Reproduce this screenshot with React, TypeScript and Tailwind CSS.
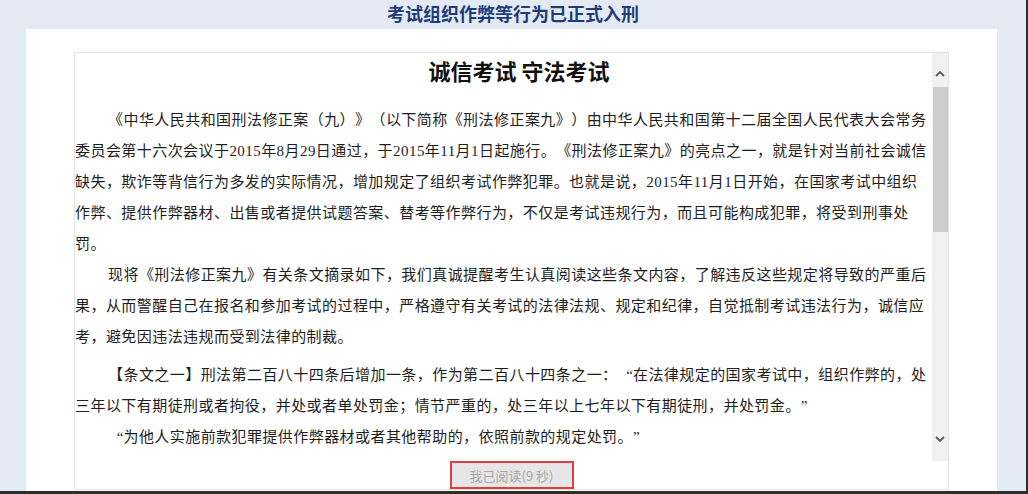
import React from "react"

const FONT = { fontFamily: '"Liberation Serif", "Noto Sans CJK SC", serif' }

const paragraphs: { lines: string[]; className?: string }[] = [
  {
    lines: [
      "《中华人民共和国刑法修正案（九）》（以下简称《刑法修正案九》）由中华人民共和国第十二届全国人民代表大会常务",
      "委员会第十六次会议于2015年8月29日通过，于2015年11月1日起施行。《刑法修正案九》的亮点之一，就是针对当前社会诚信",
      "缺失，欺诈等背信行为多发的实际情况，增加规定了组织考试作弊犯罪。也就是说，2015年11月1日开始，在国家考试中组织",
      "作弊、提供作弊器材、出售或者提供试题答案、替考等作弊行为，不仅是考试违规行为，而且可能构成犯罪，将受到刑事处",
      "罚。",
    ],
  },
  {
    lines: [
      "现将《刑法修正案九》有关条文摘录如下，我们真诚提醒考生认真阅读这些条文内容，了解违反这些规定将导致的严重后",
      "果，从而警醒自己在报名和参加考试的过程中，严格遵守有关考试的法律法规、规定和纪律，自觉抵制考试违法行为，诚信应",
      "考，避免因违法违规而受到法律的制裁。",
    ],
  },
  {
    className: "mt-[7px]",
    lines: [
      "【条文之一】刑法第二百八十四条后增加一条，作为第二百八十四条之一：“在法律规定的国家考试中，组织作弊的，处",
      "三年以下有期徒刑或者拘役，并处或者单处罚金；情节严重的，处三年以上七年以下有期徒刑，并处罚金。”",
    ],
  },
  {
    lines: ["“为他人实施前款犯罪提供作弊器材或者其他帮助的，依照前款的规定处罚。”"],
  },
]

// full-width boxes for curly quotes so they take one character cell like the original
function renderLine(line: string) {
  return line.split(/([“”])/).map((part, i) => {
    if (part === "“") {
      return (
        <span key={i} className="inline-block w-[15.44px] text-right tracking-normal">
          “
        </span>
      )
    }
    if (part === "”") {
      return (
        <span key={i} className="inline-block w-[15.44px] text-left tracking-normal">
          ”
        </span>
      )
    }
    return <React.Fragment key={i}>{part}</React.Fragment>
  })
}

function Chevron({ up }: { up?: boolean }) {
  return (
    <svg width="10" height="6" viewBox="0 0 10 6" className="block">
      <path
        d={up ? "M1 5 L5 1.2 L9 5" : "M1 1 L5 4.8 L9 1"}
        fill="none"
        stroke="#555"
        strokeWidth="1.8"
      />
    </svg>
  )
}

export default function App() {
  return (
    <div className="w-[1028px] h-[494px] bg-[#e4eaf4] flex flex-col border-b-[3px] border-r-[2px] border-[#2e2e2e] overflow-hidden">
      {/* top heading */}
      <div className="h-[30px] flex justify-center">
        <h1
          className="text-[18px] leading-[26px] font-bold text-[#1f3c7a]"
          style={{ fontFamily: '"Noto Sans CJK SC", sans-serif' }}
        >
          考试组织作弊等行为已正式入刑
        </h1>
      </div>

      <div className="ml-[26px] w-[971px] flex-1 bg-white pt-[23px] pl-[48px] pb-[1px]">
        <div className="w-[875px] h-full border border-[#e2e2e2] flex flex-col">
          <div className="h-[408px] flex">
            {/* text area */}
            <div className="flex-1 overflow-hidden text-[#1e1e1e] [text-spacing-trim:space-all]" style={FONT}>
              <h2
                className="h-[34px] pl-[31px] text-center text-[22px] leading-[34px] font-bold text-[#111] mb-[18px]"
                style={{ fontFamily: '"Noto Sans CJK SC", serif' }}
              >
                诚信考试 守法考试
              </h2>
              {paragraphs.map((p, i) => (
                <p key={i} className={`text-[15px] leading-[31px] tracking-[0.44px] ${p.className ?? ""}`}>
                  {p.lines.map((line, j) => (
                    <span key={j} className={`block whitespace-nowrap ${j === 0 ? "pl-[33px]" : ""}`}>
                      {renderLine(line)}
                    </span>
                  ))}
                </p>
              ))}
            </div>

            {/* scrollbar */}
            <div className="w-[16px] bg-[#f0f0f0] flex flex-col items-center">
              <div className="h-[34px] flex items-center justify-center pt-[7px]">
                <Chevron up />
              </div>
              <div className="w-[15px] h-[145px] bg-[#cdcdcd]" />
              <div className="flex-1" />
              <div className="h-[34px] flex items-center justify-center pb-[10px]">
                <Chevron />
              </div>
            </div>
          </div>

          {/* read button */}
          <div className="flex-1 flex justify-center">
            <button
              className="w-[124px] h-[28px] border-2 border-[#e53a3a] bg-[#e6e6e6] text-[13px] text-[#a8a8a8] leading-none"
              style={{ fontFamily: '"Noto Sans CJK SC", sans-serif' }}
            >
              我已阅读(9 秒)
            </button>
          </div>
        </div>
      </div>
    </div>
  )
}
